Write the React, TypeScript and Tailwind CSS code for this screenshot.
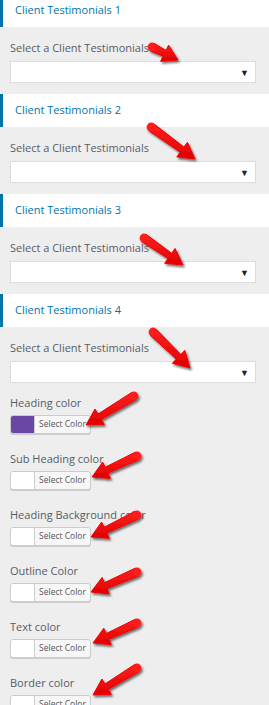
const font = { fontFamily: '"Open Sans", "Noto Sans", sans-serif' };

type Pt = [number, number];

// red annotation arrows drawn over the panel
const ARROWS: { tail: Pt; tip: Pt; head?: number }[] = [
  { tail: [152, 47], tip: [178, 60], head: 15 },
  { tail: [151, 127], tip: [195, 159] },
  { tail: [144, 238], tip: [183, 265] },
  { tail: [153, 332], tip: [190, 368] },
  { tail: [134, 396], tip: [86, 425] },
  { tail: [137, 456], tip: [92, 477] },
  { tail: [137, 515], tip: [91, 537] },
  { tail: [137, 572], tip: [91, 592] },
  { tail: [137, 623], tip: [93, 643] },
  { tail: [137, 668], tip: [93, 695] },
];

function arrowPoints(tail: Pt, tip: Pt, headLen = 16): string {
  const dx = tip[0] - tail[0];
  const dy = tip[1] - tail[1];
  const len = Math.hypot(dx, dy);
  const ux = dx / len;
  const uy = dy / len;
  const nx = -uy;
  const ny = ux;
  const bx = tip[0] - ux * headLen;
  const by = tip[1] - uy * headLen;
  const sw = 3.2; // shaft half-width near head
  const tw = 4.2; // shaft half-width at tail
  const hw = 9; // head half-width
  const pts: Pt[] = [
    [tail[0] + nx * tw, tail[1] + ny * tw],
    [bx + nx * sw, by + ny * sw],
    [bx + nx * hw, by + ny * hw],
    [tip[0], tip[1]],
    [bx - nx * hw, by - ny * hw],
    [bx - nx * sw, by - ny * sw],
    [tail[0] - nx * tw, tail[1] - ny * tw],
  ];
  return pts.map((p) => `${p[0].toFixed(1)},${p[1].toFixed(1)}`).join(" ");
}

function Arrows() {
  return (
    <svg
      className="pointer-events-none absolute left-0 top-0"
      width={269}
      height={705}
      viewBox="0 0 269 705"
    >
      <defs>
        <filter id="arrow-shadow" x="-30%" y="-30%" width="160%" height="160%">
          <feDropShadow dx="1.5" dy="2" stdDeviation="1.3" floodColor="#000" floodOpacity="0.55" />
        </filter>
        <linearGradient id="arrow-fill" x1="0" y1="0" x2="0" y2="1">
          <stop offset="0" stopColor="#ff2020" />
          <stop offset="1" stopColor="#e00000" />
        </linearGradient>
      </defs>
      {ARROWS.map((a, i) => (
        <g key={i} filter="url(#arrow-shadow)">
          <polygon points={arrowPoints(a.tail, a.tip, a.head)} fill="url(#arrow-fill)" strokeLinejoin="round" stroke="#f00000" strokeWidth={1} />
          <circle cx={a.tail[0]} cy={a.tail[1]} r={4.4} fill="#ff1a1a" />
        </g>
      ))}
    </svg>
  );
}

function SectionHeader({ title }: { title: string }) {
  return (
    <div className="flex h-[33px] items-center border-l-[3px] border-[#0073aa] bg-white pl-[12px]">
      <span className="text-[11px] text-[#0073aa]">{title}</span>
    </div>
  );
}

function SelectBox() {
  return (
    <div className="mt-[5px] flex h-[22px] w-[246px] items-center justify-end border border-[#dddddd] bg-white pr-[6px]">
      <span className="text-[9px] leading-none text-[#222]">▼</span>
    </div>
  );
}

function TestimonialSection({ n, last }: { n: number; last?: boolean }) {
  return (
    <div>
      <SectionHeader title={`Client Testimonials ${n}`} />
      <div className={`px-[10px] pt-[13px] ${last ? "pb-[12px]" : "pb-[11px]"}`}>
        <p className="text-[11px] leading-[16px] text-[#555d66]">Select a Client Testimonials</p>
        <SelectBox />
      </div>
    </div>
  );
}

function ColorField({ label, color }: { label: string; color?: string }) {
  return (
    <div className="pb-[17px]">
      <p className="text-[11px] leading-[16px] text-[#555d66]">{label}</p>
      <div className="mt-[4px] flex h-[19px] w-[81px] overflow-hidden rounded-[3px] border border-[#cccccc] bg-[#f7f7f7] shadow-[0_1px_0_#cccccc]">
        <div className={`w-[24px] border-r border-[#cccccc] ${color ?? "bg-white"}`} />
        <div className="flex flex-1 items-center justify-center text-[8.5px] text-[#555555]">Select Color</div>
      </div>
    </div>
  );
}

export default function App() {
  return (
    <div className="relative h-[705px] w-[269px] overflow-hidden bg-[#eeeeee]" style={font}>
      <div className="-mt-[6px]">
        <TestimonialSection n={1} />
        <TestimonialSection n={2} />
        <TestimonialSection n={3} />
        <TestimonialSection n={4} last />
        <div className="px-[10px]">
          <ColorField label="Heading color" color="bg-[#6b47a5]" />
          <ColorField label="Sub Heading color" />
          <ColorField label="Heading Background color" />
          <ColorField label="Outline Color" />
          <ColorField label="Text color" />
          <ColorField label="Border color" />
        </div>
      </div>
      <Arrows />
    </div>
  );
}
